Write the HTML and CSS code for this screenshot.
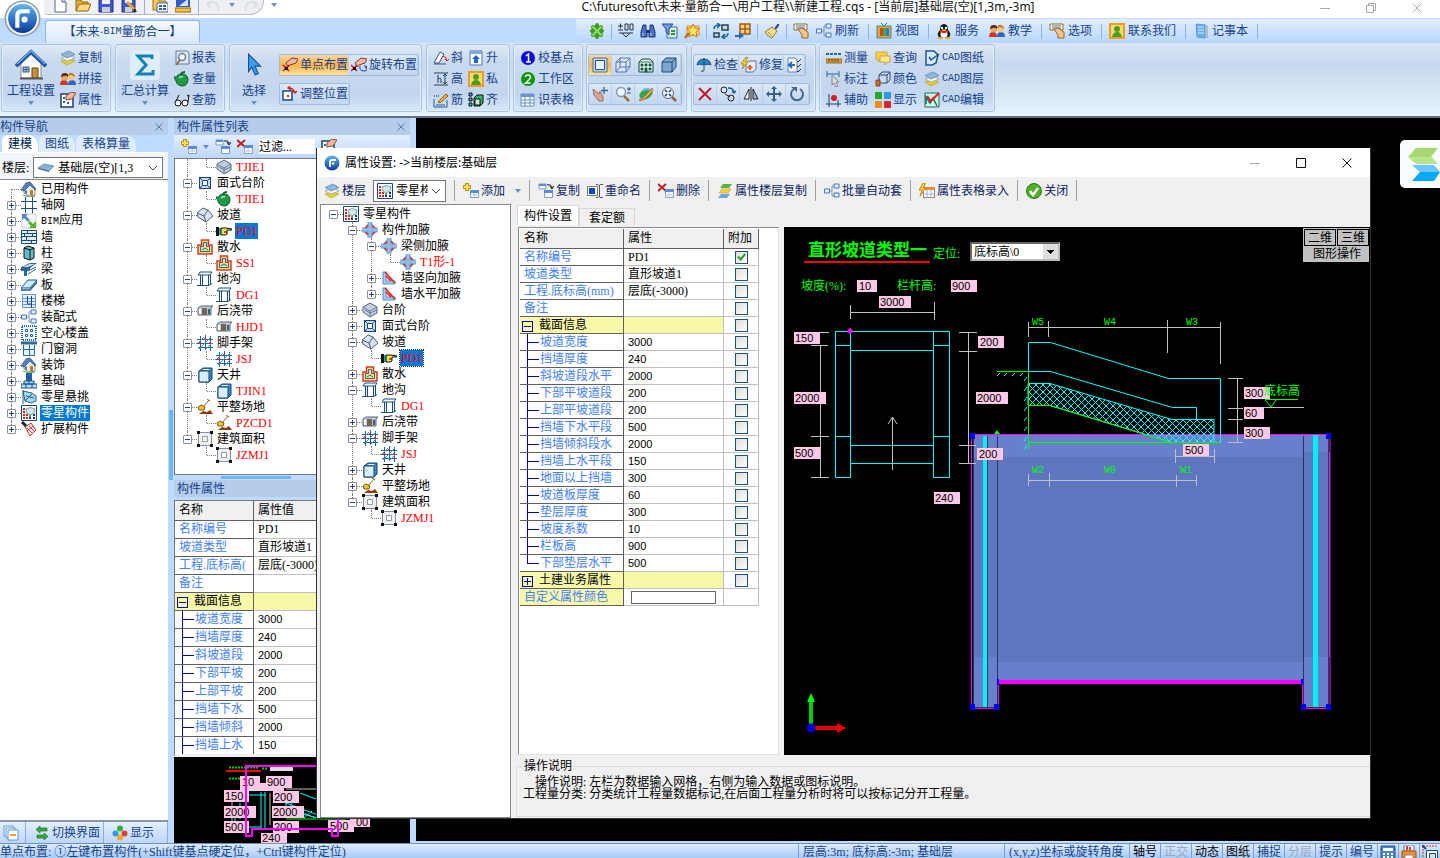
FILE: index.html
```html
<!DOCTYPE html>
<html lang="zh-CN">

<head>
    <meta charset="UTF-8">
    <meta name="viewport" content="width=device-width, initial-scale=1.0">
    <title>未来·BIM量筋合一</title>
    <link rel="stylesheet" href="styles.css">
</head>

<body>
    <!-- icon set -->
    <svg class="defs" width="0" height="0">
        <defs>
            <linearGradient id="gBlue" x1="0" y1="0" x2="0" y2="1"><stop offset="0" stop-color="#5fb4f0"/><stop offset="1" stop-color="#0a3c9c"/></linearGradient>
            <pattern id="hatch" width="7" height="7" patternUnits="userSpaceOnUse"><path d="M0 0L7 7M7 0L0 7" stroke="#0ff" fill="none"/></pattern>
        </defs>
        <symbol id="logo" viewBox="0 0 36 36"><circle cx="18" cy="18" r="17.5" fill="#8d9db3"/><circle cx="18" cy="18" r="16" fill="#f4f7fb"/><circle cx="18" cy="18" r="14" fill="url(#gBlue)"/><path d="M13 27V15q0-4 4-4h8" fill="none" stroke="#fff" stroke-width="4"/><circle cx="20" cy="19" r="3" fill="#fff"/></symbol>
        <symbol id="dlglogo" viewBox="0 0 16 16"><circle cx="8" cy="8" r="7.500" fill="url(#gBlue)"/><path d="M6 12V7q0-2 2-2h4" fill="none" stroke="#fff" stroke-width="1.800"/><circle cx="9" cy="8.500" r="1.300" fill="#fff"/></symbol>
        <symbol id="new" viewBox="0 0 16 16"><path d="M3 1h7l4 4v10H3z" fill="#fff" stroke="#5a6b88"/><path d="M10 1v4h4" fill="#cfd8e8" stroke="#5a6b88"/></symbol>
        <symbol id="open" viewBox="0 0 16 16"><path d="M1 14V3h5l1 2h6v3" fill="#e8b33c" stroke="#8a6414"/><path d="M1 14l3-7h12l-3 7z" fill="#ffd97a" stroke="#8a6414"/></symbol>
        <symbol id="save" viewBox="0 0 16 16"><path d="M1 1h14v14H1z" fill="#4456c8" stroke="#20307c"/><path d="M4 1h8v6H4z" fill="#eef"/><path d="M4 10h8v5H4z" fill="#c9cfe0"/></symbol>
        <symbol id="saveas" viewBox="0 0 16 16"><path d="M1 1h13v14H1z" fill="#4456c8" stroke="#20307c"/><path d="M4 1h7v5H4z" fill="#eef"/><path d="M4 10h7v5H4z" fill="#c9cfe0"/><path d="M6 5l8 8" stroke="#e9a720" stroke-width="3"/><path d="M13 12l2 3" stroke="#222" stroke-width="2"/></symbol>
        <symbol id="folderbe" viewBox="0 0 16 16"><path d="M1 13V2h5l1 2h7v9z" fill="#ffc94d" stroke="#96700f"/><path d="M5 6h11v9H5z" fill="#fff" stroke="#3669ad"/><path d="M7 9h3M7 12h3M11 9h3M11 12h3" stroke="#2b5db0" stroke-width="2"/></symbol>
        <symbol id="setsq" viewBox="0 0 16 16"><path d="M1 1h14v9H1z" fill="#335cc0"/><path d="M4 9l9-7v7z" fill="#cfe2ff"/><path d="M0 11h16v4H0z" fill="#ffc531" stroke="#8a6110"/></symbol>
        <symbol id="undo" viewBox="0 0 16 16"><path d="M4 4l-3 4 4 3M2 8c5-6 12-2 10 6" fill="none" stroke="#dcdfe4" stroke-width="2"/></symbol>
        <symbol id="clover" viewBox="0 0 16 16"><path d="M4 4l8 8M12 4l-8 8M8 2v12M3 8h10" stroke="#3f9a2a" stroke-width="4" stroke-linecap="round"/><path d="M4 4l8 8M12 4l-8 8" stroke="#8fdc62" stroke-width="2" stroke-linecap="round"/></symbol>
        <symbol id="elev" viewBox="0 0 16 16"><path d="M0 3h5M2.500.5v5M0 7h5M7 1h3v6H7zM12 1h3v6h-3zM1 10h14M4 10l4 4 4-4" fill="none" stroke="#26303c"/></symbol>
        <symbol id="binoc" viewBox="0 0 16 16"><path d="M3 2h3v4l1 2v6H1V9zM10 2h3l2 7v5H9V8l1-2z" fill="#4a6fc0" stroke="#1c3677"/><path d="M6 7h4v3H6z" fill="#1c3677"/><path d="M3 10v3M11 10v3" stroke="#bcd3ff"/></symbol>
        <symbol id="filter" viewBox="0 0 16 16"><path d="M5 4h10v11H5z" fill="#dff3d8" stroke="#3668b0"/><path d="M0 1h11L7 6v6L4 9V6z" fill="#6f9ade" stroke="#25498c"/><path d="M9 8h4M9 11h4" stroke="#2b9c35" stroke-width="2"/></symbol>
        <symbol id="star" viewBox="0 0 16 16"><path d="M3 3h12v9H3z" fill="#ffd88a" stroke="#d08a2a"/><path d="M9 1l2 4 4 .5-3 3.500 1 5-4-2.500L5 14l1-5-3-3.500L7 5z" fill="#ffe65c" stroke="#d07c10"/><path d="M1 15l4-5" stroke="#c46d12" stroke-width="2.500"/></symbol>
        <symbol id="swap" viewBox="0 0 16 16"><path d="M1 10h5v4H1zM9 2h6v5H9z" fill="#cfe2c4" stroke="#26405f" stroke-width="1.500"/><path d="M1 6q0-4 5-4M4 0l3 2-3 3M15 10q0 4-5 4M12 11l-3 3 3 2" fill="none" stroke="#17639e" stroke-width="1.500"/></symbol>
        <symbol id="grid4" viewBox="0 0 16 16"><path d="M5 1h10v10H5z" fill="#ffd37e" stroke="#a35b12" stroke-width="1.500"/><path d="M10 1v10M5 6h10" stroke="#a35b12" stroke-width="1.500"/><path d="M0 12h4v-3l5 4-5 3v-2H0z" fill="#2d66c8"/></symbol>
        <symbol id="brush" viewBox="0 0 16 16"><path d="M11 5l3-4 1 1-3 4z" fill="#335ea8" stroke="#1f3f7a"/><path d="M8 4l5 4-5 7q-4-1-7-6z" fill="#f1dd8c" stroke="#997b2c"/><path d="M4 9l4 4" stroke="#b08c2d"/></symbol>
        <symbol id="handsheet" viewBox="0 0 16 16"><path d="M1 1h13v6H1z" fill="#fff8da" stroke="#8a6d2e"/><path d="M3 3h9M3 5h9" stroke="#5676b5"/><path d="M5 6l4 6v3h6v-6L9 5z" fill="#f3c785" stroke="#98642a"/></symbol>
        <symbol id="tree" viewBox="0 0 16 16"><path d="M5 8h3M8 3v10M8 3h2M8 13h2" fill="none" stroke="#8794ab"/><path d="M.5 6h5v4h-5zM10 1h5v4h-5zM10 10h5v4h-5z" fill="#eaf3ff" stroke="#3f72cc"/></symbol>
        <symbol id="tv" viewBox="0 0 16 16"><path d="M5 0l3 3 3-3" fill="none" stroke="#1787a8"/><path d="M1 3h14v12H1z" fill="#e2a632" stroke="#3d8aa0"/><path d="M4 5h3v8H4z" fill="#e63c2a"/><path d="M7 5h3v8H7z" fill="#3fae38"/><path d="M10 5h3v8h-3z" fill="#2f78d6"/></symbol>
        <symbol id="qq" viewBox="0 0 16 16"><path d="M3 14Q0 11 4 7q0-6 4-6t4 6q4 4 1 7z" fill="#15171c"/><ellipse cx="8" cy="11" rx="3.500" ry="4" fill="#fff"/><path d="M4 8q4 2 8 0" stroke="#e32118" stroke-width="2" fill="none"/><path d="M6 4v2M10 4v2" stroke="#fff" stroke-width="2"/><path d="M6 7h4" stroke="#f5a915" stroke-width="1.500"/><path d="M2 15h5M9 15h5" stroke="#f5a915" stroke-width="2"/></symbol>
        <symbol id="people" viewBox="0 0 16 16"><path d="M0 14q0-5 4-5t4 5z" fill="#c93a22"/><path d="M8 14q0-5 4-5t4 5z" fill="#2f62c4"/><circle cx="4.500" cy="6" r="3.500" fill="#e9a866"/><path d="M1 6q0-4 4-4t3 4q-2-2-4-1z" fill="#503017"/><circle cx="11.500" cy="6" r="3.500" fill="#f6c88d"/><path d="M8 5q1-4 4-3t3 4q-3-2-4-2z" fill="#c27a16"/></symbol>
        <symbol id="contact" viewBox="0 0 16 16"><path d="M0 0h16v16H0z" fill="#f09a28"/><path d="M2 2h12v12H2z" fill="#f7dd6c"/><circle cx="8" cy="6" r="3" fill="#4c9c22"/><path d="M3 14q1-5 5-5t5 5z" fill="#4c9c22"/></symbol>
        <symbol id="note" viewBox="0 0 16 16"><path d="M3 1l9 1v13l-8-1z" fill="#6fb1ea" stroke="#4d8cc8" stroke-width=".8"/><path d="M5 4h6M5 7h6M5 10h6" stroke="#cfe7ff"/><path d="M12 2l2 1v12" fill="none" stroke="#999"/></symbol>
        <symbol id="bighouse" viewBox="0 0 32 32"><path d="M6 14L16 4l10 10v15H6z" fill="#fbfbf6" stroke="#8f8f86"/><path d="M1 17L16 3l15 14" fill="none" stroke="#1d569f" stroke-width="4"/><path d="M2 15L16 2l14 13" fill="none" stroke="#6fa8e6" stroke-width="1.500"/><path d="M17 19h6v10h-6z" fill="#c8923d" stroke="#6a4310"/><path d="M8 18h6v5H8zM11 18v5M8 20.500h6" fill="#b9cfe8" stroke="#35557f"/><path d="M5 29.500h23" stroke="#555" stroke-width="2"/></symbol>
        <symbol id="house" viewBox="0 0 16 16"><path d="M3 8l6-6 5 6v6l-6 1-5-3z" fill="#f2efe2" stroke="#8d8d8d"/><path d="M0 9l5-7 4-1 6 7-1 1-5-5-6 6z" fill="#4f82bd" stroke="#2b5590" stroke-width=".8"/><path d="M9 9h3v5H9z" fill="#b97b2b"/><path d="M4 9l2 1v3l-2-1z" fill="#3b75b5"/><path d="M2 14l6 2 6-1" stroke="#5fa33c" fill="none"/></symbol>
        <symbol id="layers" viewBox="0 0 16 16"><path d="M1 11l8-3 6 3-8 4z" fill="#e6cd30" stroke="#bba826" stroke-width=".8"/><path d="M1 8l8-3 6 3-8 3z" fill="#f3f6fa" stroke="#93a5bd" stroke-width=".8"/><path d="M1 4.500L9 1l6 3.500L7 8z" fill="#8fb6dc" stroke="#5f86b1" stroke-width=".8"/></symbol>
        <symbol id="form" viewBox="0 0 16 16"><path d="M1 2h12v13H1z" fill="#fff" stroke="#1c3f6d" stroke-width="1.500"/><path d="M3 5h2v2H3zM3 9h2v2H3zM7 10h2v2H7z" fill="#1b63b0"/><path d="M6 8V4l5-4 5 1-4 6z" fill="#f2b7a0" stroke="#9b452f"/></symbol>
        <symbol id="sigma" viewBox="0 0 32 32"><rect x="1" y="1" width="30" height="30" rx="4" fill="#dfecfa"/><path d="M23 10V7H9l8 9-8 9h15v-4" fill="none" stroke="#0e84b8" stroke-width="3"/></symbol>
        <symbol id="report" viewBox="0 0 16 16"><path d="M2 1h11l2 2v11H2z" fill="#dfe9f6" stroke="#5e7ba6"/><circle cx="8" cy="7" r="3.500" fill="#f5faff" stroke="#6c7f99" stroke-width="1.500"/><path d="M6 10l-4 5" stroke="#9a6a35" stroke-width="2"/></symbol>
        <symbol id="pot" viewBox="0 0 16 16"><path d="M3 6q0-3 5-3t6 5q0 6-5 7-6 0-7-5L0 6z" fill="#1d9a48" stroke="#0c5a26"/><path d="M7 3q1-2 4-2" stroke="#0c5a26" stroke-width="2" fill="none"/><path d="M5 7q2-2 4-1" stroke="#a9f0bd" stroke-width="1.500" fill="none"/></symbol>
        <symbol id="glasses" viewBox="0 0 16 16"><circle cx="4" cy="11" r="3" fill="#fff" stroke="#111"/><circle cx="11" cy="11" r="3" fill="#fff" stroke="#111"/><path d="M2 9l3-6M14 10l1-7-2 1M7 11h1" stroke="#111" fill="none"/></symbol>
        <symbol id="cursor" viewBox="0 0 16 22"><path d="M3 1l11 11H9l3 7-3 1-3-7-3 4z" fill="#3d9bea" stroke="#124f94"/></symbol>
        <symbol id="pick" viewBox="0 0 16 16"><path d="M4 6l6-5 6 1-2 4-6 2-2 2z" fill="#f3b8a2" stroke="#7d3b33"/><path d="M1 8l6 6M7 8l-6 6" stroke="#d11" stroke-width="1.500"/><path d="M3 10h3v3H3z" fill="#111"/></symbol>
        <symbol id="pickrot" viewBox="0 0 16 16"><path d="M4 6l6-5 6 1-2 4-6 2-2 2z" fill="#f3b8a2" stroke="#7d3b33"/><path d="M0 8l6 6M6 8l-6 6" stroke="#d11" stroke-width="1.500"/><path d="M2 10h3v3H2z" fill="#111"/><path d="M9 9q-1 5 4 5t2-5M13 9h2v3" fill="none" stroke="#1e35b8"/></symbol>
        <symbol id="adjust" viewBox="0 0 16 16"><path d="M1 5h9v9H1z" fill="#fff" stroke="#174a80" stroke-width="1.500"/><path d="M5 9h2v2H5z" fill="#d22"/><path d="M6 2q5-1 7 5M8 0L6 2l3 2M11 5l2 2 2-2" fill="none" stroke="#e01212" stroke-width="1.300"/></symbol>
        <symbol id="slope" viewBox="0 0 16 16"><path d="M1 13L7 2l4 2-5 9z" fill="#fff" stroke="#2d558f"/><path d="M1 14h12" stroke="#2d558f"/><path d="M10 6q4 1 4 5M12 9l2 2 2-2" fill="none" stroke="#d22"/></symbol>
        <symbol id="uparr" viewBox="0 0 16 16"><path d="M2 1h12v14H2z" fill="#fff" stroke="#4b77b8"/><path d="M2 1h12v3H2z" fill="#7da7e0"/><path d="M8 5l4 4h-2v4H6V9H4z" fill="#1f66c9"/></symbol>
        <symbol id="height" viewBox="0 0 16 16"><path d="M1 2h14M1 14h14M12 3v10M10 5l2-2 2 2M10 11l2 2 2-2M5 4v8M5 8q3-2 3 1v3" fill="none" stroke="#24405f"/></symbol>
        <symbol id="rebar" viewBox="0 0 16 16"><path d="M1 7v8h13V8M3 13h9" fill="none" stroke="#225e9a"/><path d="M5 10l8-8 2 2-8 7z" fill="#f6b545" stroke="#8a5514"/><path d="M1 4h5" stroke="#222" stroke-dasharray="1 1"/></symbol>
        <symbol id="align" viewBox="0 0 16 16"><path d="M1 1h3v3H1zM1 6h3v3H1zM1 11h3v3H1z" fill="#39b7e0" stroke="#111"/><path d="M6 6l3-3h6v8l-3 3H6z" fill="#36b06a" stroke="#111"/><path d="M7 7h5v6H7z" fill="#cfe9d9" stroke="#111"/></symbol>
        <symbol id="n1" viewBox="0 0 16 16"><circle cx="8" cy="8" r="7" fill="#0b0be0"/><path d="M6 6l2.500-2v8M6 12h5" stroke="#fff" stroke-width="1.500" fill="none"/></symbol>
        <symbol id="n2" viewBox="0 0 16 16"><circle cx="8" cy="8" r="7" fill="#08960c"/><path d="M5.500 6q0-2 2.500-2t2.500 2-5 6h5" stroke="#fff" stroke-width="1.500" fill="none"/></symbol>
        <symbol id="table" viewBox="0 0 16 16"><path d="M1 2h13v12H1z" fill="#fff" stroke="#6a8fc6"/><path d="M1 2h13v3H1z" fill="#6a96d8"/><path d="M1 8h13M1 11h13M5 2v12M10 2v12" stroke="#6a8fc6"/></symbol>
        <symbol id="vrect" viewBox="0 0 16 16"><path d="M1 1h14v14H1z" fill="#c5d6ea" stroke="#4a6e9c"/><path d="M3.500 3.500h9v9h-9z" fill="#e2f4fc" stroke="#2b4f80"/></symbol>
        <symbol id="vcube" viewBox="0 0 16 16"><path d="M1 5l4-4h10v9l-4 5H1zM1 5h10v10M11 5l4-4M5 1v9h10M5 10l-4 5" fill="#e5effc" fill-opacity=".6" stroke="#5377ad"/></symbol>
        <symbol id="vbuild" viewBox="0 0 16 16"><path d="M1 5l3-3h8l3 3v10H1z" fill="#dcece4" stroke="#0d4a3b"/><path d="M1 5h14M3 7h2v2H3zM7 7h2v2H7zM11 7h2v2h-2zM3 11h2v2H3zM11 11h2v2h-2zM7 11h2v4H7z" fill="#0d6a4b" stroke="#0d4a3b" stroke-width=".7"/></symbol>
        <symbol id="vsolid" viewBox="0 0 16 16"><path d="M1 5l4-4h10v9l-4 5H1z" fill="#7ea6d2" stroke="#23466f"/><path d="M1 5h10v10M11 5l4-4" fill="none" stroke="#23466f"/></symbol>
        <symbol id="pan" viewBox="0 0 16 16"><path d="M1 3l6 5 1-3 3 6v4H7L2 9z" fill="#dba494" stroke="#a06a5d"/><path d="M12 1v7M9 4.500h7" stroke="#3b6697" stroke-width="1.300"/></symbol>
        <symbol id="zoom" viewBox="0 0 16 16"><circle cx="6" cy="6" r="4.500" fill="#eaf6ff" stroke="#8a99aa" stroke-width="1.500"/><path d="M9 10l5 5" stroke="#a36a2d" stroke-width="2.500"/><path d="M12 3h4M14 1v4M12 7h4" stroke="#24507f"/></symbol>
        <symbol id="orbit" viewBox="0 0 16 16"><ellipse cx="8" cy="8" rx="7" ry="5" fill="#2fa94a" transform="rotate(-30 8 8)"/><path d="M1 14q4-1 13-12l1 2Q9 13 2 15z" fill="#e9b53c" stroke="#c0453a" stroke-width=".7"/><path d="M5 4q4-2 7 0" stroke="#6fb7ee" stroke-width="2" fill="none"/></symbol>
        <symbol id="zoomall" viewBox="0 0 16 16"><circle cx="7" cy="7" r="5.500" fill="#e8f3ff" stroke="#667"/><path d="M4 4l2 2M8 8l2 2M10 4L8 6M6 8l-2 2" stroke="#173b77" stroke-width="1.500"/><path d="M11 11l4 4" stroke="#a3562d" stroke-width="2.500"/></symbol>
        <symbol id="umbrella" viewBox="0 0 16 16"><path d="M1 8q1-6 7-6t7 6l-3-1-2 1-2-1-2 1-2-1z" fill="#2587cf" stroke="#11558e"/><path d="M8 1v12q0 2-3 1" fill="none" stroke="#444"/></symbol>
        <symbol id="repair" viewBox="0 0 16 16"><path d="M5 6l3-2h7v8l-3 3H5z" fill="#e8eef5" stroke="#5b6f8c"/><path d="M9 8v5M6.500 10.500h5" stroke="#f25b1f" stroke-width="2"/><path d="M5 0L0 7h3l-2 5 6-7H4l3-5z" fill="#ffd42f" stroke="#a57b0d" stroke-width=".8"/></symbol>
        <symbol id="checklist" viewBox="0 0 16 16"><path d="M2 1h7l2 2v12H2z" fill="#fff" stroke="#6582a8"/><path d="M9 8H4M6 5L3 8l3 3" fill="none" stroke="#266bc4" stroke-width="2"/><path d="M11 4l1 1 3-3M11 9l1 1 3-3M11 14l1 1 3-3" fill="none" stroke="#333"/></symbol>
        <symbol id="xred" viewBox="0 0 16 16"><path d="M2 2l12 12M14 2L2 14" stroke="#c8152b" stroke-width="2"/></symbol>
        <symbol id="copyo" viewBox="0 0 16 16"><circle cx="4" cy="4" r="3" fill="none" stroke="#222"/><circle cx="11" cy="12" r="3" fill="none" stroke="#222"/><path d="M5 8l5 3" stroke="#222"/><path d="M8 2q6 0 6 5M12 5l2 2 2-2" fill="none" stroke="#1d5fa8" stroke-width="1.500"/></symbol>
        <symbol id="mirror" viewBox="0 0 16 16"><path d="M6 3v10H1z" fill="#fff" stroke="#222"/><path d="M10 3v10h5z" fill="#9db8d8" stroke="#222"/><path d="M8 1v14" stroke="#222"/></symbol>
        <symbol id="move" viewBox="0 0 16 16"><path d="M8 2v12M2 8h12" stroke="#35618f" stroke-width="2"/><path d="M8 0l3 3H5zM8 16l3-3H5zM0 8l3-3v6zM16 8l-3-3v6z" fill="#35618f"/></symbol>
        <symbol id="rotate" viewBox="0 0 16 16"><path d="M5 3a6 6 0 1 0 6 0" fill="none" stroke="#41668f" stroke-width="2"/><path d="M2 1h6v5z" fill="#41668f"/></symbol>
        <symbol id="ruler" viewBox="0 0 16 16"><path d="M0 4h16" stroke="#2369a8" stroke-width="2" stroke-dasharray="3 1"/><path d="M0 9h16v4H0z" fill="#e1a62c" stroke="#86590d" stroke-width=".8"/><path d="M3 9v3M6 9v3M9 9v3M12 9v3" stroke="#5b3a06"/></symbol>
        <symbol id="dimcur" viewBox="0 0 16 16"><path d="M1 0v6M13 0v6M1 3h12" stroke="#2369a8"/><path d="M6 4l7 7h-3l2 4-2 1-2-4-2 2z" fill="#ddd" stroke="#888"/></symbol>
        <symbol id="axisp" viewBox="0 0 16 16"><path d="M3 2v13M0 12h15M12 8v7" stroke="#163f78"/><circle cx="8" cy="6" r="3" fill="#dc1b1b"/></symbol>
        <symbol id="bubble" viewBox="0 0 16 16"><path d="M1 2h11v7H6l-3 3V9H1z" fill="#ffd142" stroke="#c29a2c" stroke-width=".8"/><path d="M5 6h10v6h-3l-2 3v-3H5z" fill="#ffe88b" stroke="#c29a2c" stroke-width=".8"/></symbol>
        <symbol id="paintcube" viewBox="0 0 16 16"><path d="M4 4l3-3h8v8l-3 3H4zM4 4h8v8M12 4l3-3" fill="#c9dbf0" stroke="#264a78"/><path d="M1 9h4v6H1z" fill="#d06b29" stroke="#6f3511" stroke-width=".8"/></symbol>
        <symbol id="four" viewBox="0 0 16 16"><rect x="0" y="0" width="7" height="7" rx="1" fill="#23a829"/><rect x="9" y="0" width="7" height="7" rx="1" fill="#2a9be6"/><rect x="0" y="9" width="7" height="7" rx="1" fill="#f08a1d"/><rect x="9" y="9" width="7" height="7" rx="1" fill="#e02323"/></symbol>
        <symbol id="cadpaper" viewBox="0 0 16 16"><path d="M2 1h8l4 4-2 8-4 2H2z" fill="#d8eafd" stroke="#1f5596" stroke-width="1.500"/><path d="M5 7l2 3 8-6" stroke="#1f5596" stroke-width="1.500" fill="none"/></symbol>
        <symbol id="cadedit" viewBox="0 0 16 16"><path d="M1 1h14v14H1z" fill="#d5f0e4" stroke="#0d7261"/><path d="M2 12V5l4 6 3-5 4 8" stroke="#0d7261" stroke-width="1.500" fill="none"/><path d="M3 4l4 5 8-8" stroke="#e01c1c" stroke-width="2" fill="none"/></symbol>
        <!-- component icons -->
        <symbol id="slab3d" viewBox="0 0 16 16"><path d="M0 8l6-4 10 2-5 5z" fill="#88b3d9" stroke="#55799e" stroke-width=".7"/><path d="M0 8l11 3v1L0 9z" fill="#42678f"/></symbol>
        <symbol id="axis" viewBox="0 0 16 16"><path d="M4.500 0v16M11.500 0v16M0 4.500h16M0 11.500h16" stroke="#1a5384"/></symbol>
        <symbol id="bim" viewBox="0 0 16 16"><path d="M1 1h14v14H1z" fill="#f3f7fb" stroke="#c6d5e6"/><path d="M1 1h6L5 3l4 4-2 2-4-4-2 2z" fill="#5c86bd"/><path d="M15 15H8l2-2-3-3 2-2 3 3 3-3z" fill="#55b41d"/></symbol>
        <symbol id="wall" viewBox="0 0 16 16"><path d="M.5 1.500h15v13H.5z" fill="#e3f0fa" stroke="#17497c"/><path d="M0 4.500h16M0 7.500h16M0 11.500h16M6.500 1v3M11.500 4v4M5.500 8v3M10.500 12v3M3.500 5v3" stroke="#17497c"/></symbol>
        <symbol id="column" viewBox="0 0 16 16"><path d="M3 3l4-2 6 2v10l-4 2-6-2z" fill="#65bccd" stroke="#111"/><path d="M3 3l6 2 4-2M9 5v10" fill="none" stroke="#111"/></symbol>
        <symbol id="beam" viewBox="0 0 16 16"><path d="M0 6l9-4h7l-7 5v2l-3 1v5H3v-5H0z" fill="#2c6699"/><path d="M1 6l8-3h5L7 6z" fill="#cfe4f5"/><path d="M7 10l8-4M7 13l8-5" stroke="#2c6699"/></symbol>
        <symbol id="plate" viewBox="0 0 16 16"><path d="M0 11l7-8h9l-7 8z" fill="#cfe9fb" stroke="#1a5c92"/><path d="M0 11v2h9l7-8V3" fill="none" stroke="#1a5c92" stroke-width="1.500"/></symbol>
        <symbol id="stair" viewBox="0 0 16 16"><path d="M1.500 1.500h13v13h-13z" fill="#e6f1ff" stroke="#6193e8"/><path d="M1 5.500h14M1 8.500h14M1 11.500h14" stroke="#6193e8"/><path d="M6.500 3v8h4V3M10.500 7v8" fill="none" stroke="#1f3fb5"/></symbol>
        <symbol id="hollow" viewBox="0 0 16 16"><path d="M1 1h14v14H1z" fill="#e9f4ff" stroke="#2c649c" stroke-width="2" stroke-dasharray="1 1"/><path d="M4.500 4.500h2v2h-2zM9.500 4.500h2v2h-2zM4.500 9.500h2v2h-2zM9.500 9.500h2v2h-2z" fill="#fff" stroke="#2c649c"/></symbol>
        <symbol id="window" viewBox="0 0 16 16"><path d="M0 2h16" stroke="#2a6a9b" stroke-width="3"/><path d="M2.500 4v10.500h11V4M8.500 4v11M2 8.500h12" fill="#e4f6fc" stroke="#2a6a9b"/></symbol>
        <symbol id="found" viewBox="0 0 16 16"><path d="M5 0h6v8H5z" fill="#1b62a8"/><path d="M3 8h10v3H3zM0 11h16v4H0z" fill="#b9dcf5" stroke="#14528d"/><path d="M8 8v3M5 11v4M11 11v4" stroke="#14528d"/></symbol>
        <symbol id="cantil" viewBox="0 0 16 16"><path d="M2 1v14M2 2l9 2 4 3v5l-5 2-6-2z" fill="#a6d6ee" stroke="#1b628f"/><path d="M4 12l7-7M5 7l8 2" stroke="#1b628f"/></symbol>
        <symbol id="misc" viewBox="0 0 16 16"><path d="M.5.5h15v15H.5z" fill="#fff" stroke="#17497c"/><path d="M2 4h2M2 7h2M2 10h2M2 13h2M5 10h2M5 13h2" stroke="#d22" stroke-width="2"/><path d="M8 13h2M12 13h2M12 10h2" stroke="#1b2f90" stroke-width="2"/><path d="M5 4q4-3 9 0l-1 4-4 2-3-2z" fill="#d5e9ed" stroke="#7fa0aa"/><path d="M8 11h2" stroke="#1a8f2a" stroke-width="1.500"/></symbol>
        <symbol id="extend" viewBox="0 0 16 16"><path d="M4 6l6-4 5 7-6 6z" fill="#f7e6e6" stroke="#b33838"/><path d="M6 7l5 5M8 5l5 5M6 10l6-5" stroke="#d43b3b"/><path d="M1 1l4 4" stroke="#222" stroke-width="3"/></symbol>
        <symbol id="steps" viewBox="0 0 16 16"><path d="M1 5l7-4 7 4v6l-7 4-7-5z" fill="#c2cde0" stroke="#56647e"/><path d="M2 6l6 3 7-4M3 8l5 3 7-3M8 15V9" fill="none" stroke="#6c7b97"/></symbol>
        <symbol id="facestep" viewBox="0 0 16 16"><path d="M2.500 2.500h11v11h-11z" fill="#c7dcf3" stroke="#18457b"/><path d="M5.500 5.500h5v5h-5zM2 2l3 3M14 2l-3 3M2 14l3-3M14 14l-3-3" fill="#fff" stroke="#18457b"/></symbol>
        <symbol id="ramp" viewBox="0 0 16 16"><path d="M0 6l6-5 5 2 5 6-7 6-8-5z" fill="#dbe4f4" stroke="#4c5b7d"/><path d="M0 6l7 3 4-6M7 9l2 6" fill="none" stroke="#4c5b7d"/></symbol>
        <symbol id="hand" viewBox="0 0 16 16"><path d="M0 4h3v9H0z" fill="#111"/><path d="M3 5h2v7H3z" fill="#10b4c0"/><path d="M5 5h5l6 1v1h-5v4l-2 1H5z" fill="#ffe14a" stroke="#111"/><path d="M8 9h3" stroke="#111"/></symbol>
        <symbol id="apron" viewBox="0 0 16 16"><path d="M4.500 1h7v5h3.500v9H1V6h3.500z" fill="#f7e27a" stroke="#cf3b31" stroke-width="1.500"/><path d="M6.500 3.500h3v4h3v5h-9v-5h3z" fill="#f7e27a" stroke="#2f62a5"/><path d="M5 11l3-2 3 2" fill="none" stroke="#2f62a5"/></symbol>
        <symbol id="trench" viewBox="0 0 16 16"><path d="M1 4l2-3h12l-2 3z" fill="#fff" stroke="#154d86"/><path d="M3.500 4v10M11.500 4v10M5.500 4v10M0 14.500h12l3-2M13.500 4v9" fill="none" stroke="#154d86"/></symbol>
        <symbol id="strip" viewBox="0 0 16 16"><path d="M1 5l3-2h12l-2 2v7H1z" fill="#b8c6d7" stroke="#56677f"/><path d="M5 5h5v7H5z" fill="#7a644f"/><path d="M2 6h2v5H2z" fill="#fff"/><path d="M11 6h2v5h-2z" fill="#3f5c80"/></symbol>
        <symbol id="scaffold" viewBox="0 0 16 16"><path d="M3.500 1v15M8.500 0v15M13.500 1v15M0 4.500h16M0 8.500h16M1 12.500h15" stroke="#1b66a5"/><path d="M2 14L14 2M1 8l6-6M8 15l7-7" stroke="#4f8cc8"/><path d="M3 7v2M8 3v2M12 8h2" stroke="#d22" stroke-width="1.500"/></symbol>
        <symbol id="well" viewBox="0 0 16 16"><path d="M2 4l4-3h9v11l-3 3H2z" fill="#3c87bd" stroke="#0f4475"/><path d="M2 4h10v11H2z" fill="#d9eefb" stroke="#0f4475"/><path d="M5 3l2-1h6l-2 1z" fill="#fff"/></symbol>
        <symbol id="shovel" viewBox="0 0 16 16"><path d="M6 8L12 1M10 0l3 2" stroke="#8a6216"/><path d="M1 8l3-2 4 2-1 3H2z" fill="#f3c332" stroke="#7c5a0d"/><path d="M2 15l4-3 4 1 3-2 3 4z" fill="#8b3d12"/></symbol>
        <symbol id="area" viewBox="0 0 16 16"><path d="M1.500 1.500h13v13h-13z" fill="#eef1f8" stroke="#8a8f9c"/><path d="M5.500 5.500h5v5h-5z" fill="#fff" stroke="#999"/><path d="M0 0h3v3H0zM13 0h3v3h-3zM0 13h3v3H0zM13 13h3v3h-3z" fill="#111"/></symbol>
        <symbol id="haunch" viewBox="0 0 16 16"><path d="M8 0l8 8-8 8-8-8z" fill="#e32b1e"/><path d="M8 3l5 5-5 5-5-5z" fill="#fff"/><path d="M6 0h4v16H6zM0 6h16v4H0z" fill="#8fbbe8"/><path d="M6 0v6H0M10 0v6h6M6 16v-6H0M10 16v-6h6" fill="none" stroke="#5a8fc4" stroke-width=".7"/></symbol>
        <symbol id="whaunch" viewBox="0 0 16 16"><path d="M2 2h3v9h9v3H2z" fill="#a9c9ec" stroke="#5f8fc9"/><path d="M4 2l10 11M5 6l5 5" stroke="#d9231c" stroke-width="1.500"/></symbol>
        <symbol id="add" viewBox="0 0 16 16"><path d="M4 0v8M0 4h8" stroke="#b8951f" stroke-width="4"/><path d="M4 1v6M1 4h6" stroke="#ffe14d" stroke-width="2"/><path d="M7.500 7.500h8v7h-8z" fill="#fff" stroke="#7f9ac5"/><path d="M7 7h9v3H7z" fill="#5c8bd6"/><path d="M7 12h9M11 10v5" stroke="#b5c6e0"/></symbol>
        <symbol id="copy" viewBox="0 0 16 16"><path d="M1 1h7v5H1z" fill="#fff" stroke="#7f9ac5"/><path d="M1 1h7v2H1z" fill="#5c8bd6"/><path d="M6.500 7.500h8v7h-8z" fill="#fff" stroke="#7f9ac5"/><path d="M6 7h9v3H6z" fill="#5c8bd6"/><path d="M9 2q5-1 5 3M12 3l2 3 2-3" fill="none" stroke="#111"/></symbol>
        <symbol id="del" viewBox="0 0 16 16"><path d="M0 1l8 7M8 1L0 8" stroke="#c01c1c" stroke-width="2"/><path d="M7.500 6.500h8v8h-8z" fill="#fff" stroke="#7f9ac5"/><path d="M7 6h9v3H7z" fill="#5c8bd6"/><path d="M7 12h9M11 9v6" stroke="#b5c6e0"/></symbol>
        <symbol id="rename" viewBox="0 0 16 16"><path d="M.5 3.500h10v9H.5z" fill="#fff" stroke="#777"/><path d="M2 5h6v6H2z" fill="#1345c9"/><path d="M9 1.500h2l1 1 1-1h3M12.500 2v12M9 14.500h2l1-1 1 1h3" fill="none" stroke="#555"/></symbol>
        <symbol id="stack" viewBox="0 0 16 16"><path d="M3 5l3-4h9l-3 4z" fill="#57b53c"/><path d="M2 10l3-4h9l-3 4z" fill="#f6d13c" stroke="#c79a20" stroke-width=".6"/><path d="M1 15l3-4h9l-3 4z" fill="#64a7ea"/></symbol>
        <symbol id="entry" viewBox="0 0 16 16"><path d="M4.500 4.500h11v10h-11z" fill="#fff" stroke="#a07a60"/><path d="M4 4h12v3H4z" fill="#f08a3c"/><path d="M4 11h12M8 7v8M12 7v8" stroke="#9db4d8"/><path d="M4 0L0 7h3l-2 6 6-8H4l3-5z" fill="#ffd42f" stroke="#a57b0d" stroke-width=".8"/></symbol>
        <symbol id="ok" viewBox="0 0 16 16"><circle cx="8" cy="8" r="7.500" fill="#4caf24" stroke="#2d7412"/><path d="M4 8l3 4 5-7" fill="none" stroke="#fff" stroke-width="2.500"/></symbol>
        <symbol id="pages" viewBox="0 0 16 16"><path d="M1 1h9v10H1z" fill="#fff" stroke="#5a9ad8"/><path d="M3 3h9v10H3z" fill="#fff" stroke="#5a9ad8"/><path d="M5 5h10v10H5z" fill="#fff" stroke="#5a9ad8"/><path d="M7 10h6" stroke="#f2a019" stroke-width="2"/></symbol>
        <symbol id="switch" viewBox="0 0 16 16"><path d="M6 1v2h7v3H6v2L2 4.500zM10 8v2H3v3h7v2l4-3.500z" fill="#35a83a" stroke="#1b7a22" stroke-width=".7"/></symbol>
        <symbol id="balls" viewBox="0 0 16 16"><circle cx="8" cy="3.500" r="3" fill="#33b13a"/><circle cx="3.500" cy="8.500" r="3" fill="#2b9ae0"/><circle cx="12.500" cy="8.500" r="3" fill="#e2402b"/><circle cx="8" cy="12.500" r="3" fill="#f4a921"/></symbol>
        <symbol id="calc" viewBox="0 0 16 16"><path d="M1 1h14v14H1z" fill="#4d86c8" stroke="#23508c"/><path d="M3 3h10v3H3z" fill="#fff"/><path d="M3 9h10M3 12h10" stroke="#fff" stroke-width="2" stroke-dasharray="2 2"/></symbol>
        <symbol id="print" viewBox="0 0 16 16"><path d="M3 0h10v6H3z" fill="#fff" stroke="#3c7cc0"/><path d="M6 1v4M9 2v3" stroke="#e33" stroke-width="2"/><path d="M1 6h14v7H1z" fill="#f0912b" stroke="#9b550f"/><path d="M4 10h8v5H4z" fill="#fff" stroke="#888"/></symbol>
        <symbol id="frame" viewBox="0 0 16 16"><path d="M1 1h15M1 1v15" stroke="#d22" stroke-dasharray="2 1"/><path d="M4.500 5.500h11v11h-11z" fill="#fff" stroke="#174a80"/><path d="M7.500 8.500h6v8h-6z" fill="#cfe2f7" stroke="#174a80"/><path d="M0 0l4 4" stroke="#174a80" stroke-width="2"/></symbol>
        <symbol id="down" viewBox="0 0 6 4"><path d="M0 0h6L3 4z" fill="#6d8fbf"/></symbol>
        <symbol id="chev" viewBox="0 0 10 6"><path d="M1 1l4 4 4-4" fill="none" stroke="#444"/></symbol>
        <symbol id="x" viewBox="0 0 10 10"><path d="M.5.5l9 9M9.500.5l-9 9" stroke="currentColor" fill="none"/></symbol>
        <symbol id="min" viewBox="0 0 10 10"><path d="M0 5.500h10" stroke="currentColor"/></symbol>
        <symbol id="max" viewBox="0 0 10 10"><path d="M.5.5h9v9h-9z" stroke="currentColor" fill="none"/></symbol>
        <symbol id="restore" viewBox="0 0 10 10"><path d="M.5 2.500h7v7h-7zM2.500 2.500v-2h7v7h-2" stroke="currentColor" fill="none"/></symbol>
    </svg>

    <header class="app-header">
        <div class="titlebar">
            <div class="quick">
                <button><svg class="ic"><use href="#new"/></svg></button>
                <button><svg class="ic"><use href="#open"/></svg></button>
                <button><svg class="ic"><use href="#save"/></svg></button>
                <button><svg class="ic"><use href="#saveas"/></svg></button>
                <i class="sep"></i>
                <button><svg class="ic"><use href="#folderbe"/></svg></button>
                <button><svg class="ic"><use href="#setsq"/></svg></button>
                <i class="sep"></i>
                <button><svg class="ic"><use href="#undo"/></svg></button>
                <svg class="down"><use href="#down"/></svg>
                <button><svg class="ic flip"><use href="#undo"/></svg></button>
                <svg class="down"><use href="#down"/></svg>
            </div>
            <button class="quick-more"><svg class="down"><use href="#down"/></svg></button>
            <h1 class="title">C:\futuresoft\未来·量筋合一\用户工程\\新建工程.cqs - [当前层]基础层(空)[1,3m,-3m]</h1>
            <div class="win-btns muted">
                <button aria-label="最小化"><svg><use href="#min"/></svg></button>
                <button aria-label="还原"><svg><use href="#restore"/></svg></button>
                <button aria-label="退出"><svg><use href="#x"/></svg></button>
            </div>
        </div>
        <button class="app-logo" aria-label="菜单"><svg><use href="#logo"/></svg></button>
        <div class="tabrow">
            <button class="app-tab">【未来·<span class="lat">BIM</span>量筋合一】</button>
            <nav class="topbar">
                <button><svg class="ic"><use href="#clover"/></svg></button>
                <i class="sep"></i>
                <button><svg class="ic"><use href="#elev"/></svg></button>
                <button><svg class="ic"><use href="#binoc"/></svg></button>
                <button><svg class="ic"><use href="#filter"/></svg></button>
                <button><svg class="ic"><use href="#star"/></svg></button>
                <i class="sep"></i>
                <button><svg class="ic"><use href="#swap"/></svg></button>
                <button><svg class="ic"><use href="#grid4"/></svg></button>
                <i class="sep"></i>
                <button><svg class="ic"><use href="#brush"/></svg></button>
                <i class="sep"></i>
                <button><svg class="ic"><use href="#handsheet"/></svg></button>
                <button class="txt"><svg class="ic"><use href="#tree"/></svg>刷新</button>
                <i class="sep"></i>
                <button class="txt"><svg class="ic"><use href="#tv"/></svg>视图</button>
                <i class="sep"></i>
                <button class="txt"><svg class="ic"><use href="#qq"/></svg>服务</button>
                <button class="txt"><svg class="ic"><use href="#people"/></svg>教学</button>
                <i class="sep"></i>
                <button class="txt"><svg class="ic"><use href="#handsheet"/></svg>选项</button>
                <i class="sep"></i>
                <button class="txt"><svg class="ic"><use href="#contact"/></svg>联系我们</button>
                <i class="sep"></i>
                <button class="txt"><svg class="ic"><use href="#note"/></svg>记事本</button>
                <i class="sep"></i>
            </nav>
        </div>
        <div class="ribbon">
            <section class="group g1">
                <button class="big"><svg class="big-ic"><use href="#bighouse"/></svg>工程设置<svg class="down"><use href="#down"/></svg></button>
                <div class="col">
                    <button><svg class="ic"><use href="#layers"/></svg>复制</button>
                    <button><svg class="ic"><use href="#people"/></svg>拼接</button>
                    <button><svg class="ic"><use href="#form"/></svg>属性</button>
                </div>
            </section>
            <section class="group g1">
                <button class="big"><svg class="big-ic"><use href="#sigma"/></svg>汇总计算<svg class="down"><use href="#down"/></svg></button>
                <div class="col">
                    <button><svg class="ic"><use href="#report"/></svg>报表</button>
                    <button><svg class="ic"><use href="#pot"/></svg>查量</button>
                    <button><svg class="ic"><use href="#glasses"/></svg>查筋</button>
                </div>
            </section>
            <section class="group g3">
                <button class="big narrow"><svg class="big-ic"><use href="#cursor"/></svg>选择<svg class="down"><use href="#down"/></svg></button>
                <div class="bars">
                    <div class="bar">
                        <button class="on"><svg class="ic"><use href="#pick"/></svg>单点布置</button>
                        <button><svg class="ic"><use href="#pickrot"/></svg>旋转布置</button>
                    </div>
                    <div class="bar">
                        <button><svg class="ic"><use href="#adjust"/></svg>调整位置</button>
                    </div>
                </div>
            </section>
            <section class="group g4">
                <div class="col">
                    <button><svg class="ic"><use href="#slope"/></svg>斜</button>
                    <button><svg class="ic"><use href="#height"/></svg>高</button>
                    <button><svg class="ic"><use href="#rebar"/></svg>筋</button>
                </div>
                <div class="col">
                    <button><svg class="ic"><use href="#uparr"/></svg>升</button>
                    <button><svg class="ic"><use href="#contact"/></svg>私</button>
                    <button><svg class="ic"><use href="#align"/></svg>齐</button>
                </div>
            </section>
            <section class="group g5">
                <div class="col">
                    <button><svg class="ic"><use href="#n1"/></svg>校基点</button>
                    <button><svg class="ic"><use href="#n2"/></svg>工作区</button>
                    <button><svg class="ic"><use href="#table"/></svg>识表格</button>
                </div>
            </section>
            <section class="group g6">
                <div class="bars">
                    <div class="bar icons">
                        <button class="on"><svg class="ic"><use href="#vrect"/></svg></button>
                        <button><svg class="ic"><use href="#vcube"/></svg></button>
                        <button><svg class="ic"><use href="#vbuild"/></svg></button>
                        <button><svg class="ic"><use href="#vsolid"/></svg></button>
                    </div>
                    <div class="bar icons">
                        <button><svg class="ic"><use href="#pan"/></svg></button>
                        <button><svg class="ic"><use href="#zoom"/></svg></button>
                        <button><svg class="ic"><use href="#orbit"/></svg></button>
                        <button><svg class="ic"><use href="#zoomall"/></svg></button>
                    </div>
                </div>
            </section>
            <section class="group g7">
                <div class="bars">
                    <div class="bar">
                        <button><svg class="ic"><use href="#umbrella"/></svg>检查</button>
                        <button><svg class="ic"><use href="#repair"/></svg>修复</button>
                        <button class="only"><svg class="ic"><use href="#checklist"/></svg></button>
                    </div>
                    <div class="bar icons">
                        <button><svg class="ic"><use href="#xred"/></svg></button>
                        <button><svg class="ic"><use href="#copyo"/></svg></button>
                        <button><svg class="ic"><use href="#mirror"/></svg></button>
                        <button><svg class="ic"><use href="#move"/></svg></button>
                        <button><svg class="ic"><use href="#rotate"/></svg></button>
                    </div>
                </div>
            </section>
            <section class="group g8">
                <div class="col">
                    <button><svg class="ic"><use href="#ruler"/></svg>测量</button>
                    <button><svg class="ic"><use href="#dimcur"/></svg>标注</button>
                    <button><svg class="ic"><use href="#axisp"/></svg>辅助</button>
                </div>
                <div class="col">
                    <button><svg class="ic"><use href="#bubble"/></svg>查询</button>
                    <button><svg class="ic"><use href="#paintcube"/></svg>颜色</button>
                    <button><svg class="ic"><use href="#four"/></svg>显示</button>
                </div>
                <div class="col">
                    <button><svg class="ic"><use href="#cadpaper"/></svg><span class="lat">CAD</span>图纸</button>
                    <button><svg class="ic"><use href="#layers"/></svg><span class="lat">CAD</span>图层</button>
                    <button><svg class="ic"><use href="#cadedit"/></svg><span class="lat">CAD</span>编辑</button>
                </div>
            </section>
        </div>
    </header>

    <main class="workspace">
        <aside class="nav-panel">
            <div class="panel-head"><h2>构件导航</h2><button aria-label="关闭导航"><svg><use href="#x"/></svg></button></div>
            <div class="nav-tabs">
                <button class="active">建模</button>
                <button>图纸</button>
                <button>表格算量</button>
            </div>
            <div class="floor">
                <label for="floor">楼层:</label>
                <div class="combo">
                    <svg class="ic"><use href="#slab3d"/></svg>
                    <select id="floor"><option>基础层(空)[1,3</option></select>
                    <svg class="chev"><use href="#chev"/></svg>
                </div>
            </div>
            <ul class="tree nav-tree">
                <li><div class="row"><svg class="ic"><use href="#house"/></svg><span>已用构件</span></div></li>
                <li><div class="row"><button class="exp plus"></button><svg class="ic"><use href="#axis"/></svg><span>轴网</span></div></li>
                <li><div class="row"><button class="exp plus"></button><svg class="ic"><use href="#bim"/></svg><span><span class="lat">BIM</span>应用</span></div></li>
                <li><div class="row"><button class="exp plus"></button><svg class="ic"><use href="#wall"/></svg><span>墙</span></div></li>
                <li><div class="row"><button class="exp plus"></button><svg class="ic"><use href="#column"/></svg><span>柱</span></div></li>
                <li><div class="row"><button class="exp plus"></button><svg class="ic"><use href="#beam"/></svg><span>梁</span></div></li>
                <li><div class="row"><button class="exp plus"></button><svg class="ic"><use href="#plate"/></svg><span>板</span></div></li>
                <li><div class="row"><button class="exp plus"></button><svg class="ic"><use href="#stair"/></svg><span>楼梯</span></div></li>
                <li><div class="row"><button class="exp plus"></button><svg class="ic"><use href="#tree"/></svg><span>装配式</span></div></li>
                <li><div class="row"><button class="exp plus"></button><svg class="ic"><use href="#hollow"/></svg><span>空心楼盖</span></div></li>
                <li><div class="row"><button class="exp plus"></button><svg class="ic"><use href="#window"/></svg><span>门窗洞</span></div></li>
                <li><div class="row"><button class="exp plus"></button><svg class="ic"><use href="#house"/></svg><span>装饰</span></div></li>
                <li><div class="row"><button class="exp plus"></button><svg class="ic"><use href="#found"/></svg><span>基础</span></div></li>
                <li><div class="row"><button class="exp plus"></button><svg class="ic"><use href="#cantil"/></svg><span>零星悬挑</span></div></li>
                <li><div class="row"><button class="exp plus"></button><svg class="ic"><use href="#misc"/></svg><span class="sel">零星构件</span></div></li>
                <li><div class="row"><button class="exp plus"></button><svg class="ic"><use href="#extend"/></svg><span>扩展构件</span></div></li>
            </ul>
            <div class="nav-foot">
                <button><svg class="ic"><use href="#pages"/></svg></button>
                <button><svg class="ic"><use href="#switch"/></svg>切换界面</button>
                <button><svg class="ic"><use href="#balls"/></svg>显示</button>
            </div>
        </aside>

        <div class="splitter"></div>

        <aside class="list-panel">
            <div class="panel-head"><h2>构件属性列表</h2><button aria-label="关闭列表"><svg><use href="#x"/></svg></button></div>
            <div class="list-tools">
                <button><svg class="ic"><use href="#add"/></svg></button>
                <svg class="down"><use href="#down"/></svg>
                <button><svg class="ic"><use href="#copy"/></svg></button>
                <button><svg class="ic"><use href="#del"/></svg></button>
                <input type="text" value="过滤..." aria-label="过滤">
                <button><svg class="ic"><use href="#form"/></svg></button>
            </div>
            <ul class="tree list-tree">
                <li><ul><li><div class="row red"><svg class="ic"><use href="#steps"/></svg><span>TJIE1</span></div></li></ul></li>
                <li><div class="row"><button class="exp"></button><svg class="ic"><use href="#facestep"/></svg><span>面式台阶</span></div>
                    <ul><li><div class="row red"><svg class="ic"><use href="#pot"/></svg><span>TJIE1</span></div></li></ul></li>
                <li><div class="row"><button class="exp"></button><svg class="ic"><use href="#ramp"/></svg><span>坡道</span></div>
                    <ul><li><div class="row red"><svg class="ic"><use href="#hand"/></svg><span class="sel">PD1</span></div></li></ul></li>
                <li><div class="row"><button class="exp"></button><svg class="ic"><use href="#apron"/></svg><span>散水</span></div>
                    <ul><li><div class="row red"><svg class="ic"><use href="#apron"/></svg><span>SS1</span></div></li></ul></li>
                <li><div class="row"><button class="exp"></button><svg class="ic"><use href="#trench"/></svg><span>地沟</span></div>
                    <ul><li><div class="row red"><svg class="ic"><use href="#trench"/></svg><span>DG1</span></div></li></ul></li>
                <li><div class="row"><button class="exp"></button><svg class="ic"><use href="#strip"/></svg><span>后浇带</span></div>
                    <ul><li><div class="row red"><svg class="ic"><use href="#strip"/></svg><span>HJD1</span></div></li></ul></li>
                <li><div class="row"><button class="exp"></button><svg class="ic"><use href="#scaffold"/></svg><span>脚手架</span></div>
                    <ul><li><div class="row red"><svg class="ic"><use href="#scaffold"/></svg><span>JSJ</span></div></li></ul></li>
                <li><div class="row"><button class="exp"></button><svg class="ic"><use href="#well"/></svg><span>天井</span></div>
                    <ul><li><div class="row red"><svg class="ic"><use href="#well"/></svg><span>TJIN1</span></div></li></ul></li>
                <li><div class="row"><button class="exp"></button><svg class="ic"><use href="#shovel"/></svg><span>平整场地</span></div>
                    <ul><li><div class="row red"><svg class="ic"><use href="#shovel"/></svg><span>PZCD1</span></div></li></ul></li>
                <li><div class="row"><button class="exp"></button><svg class="ic"><use href="#area"/></svg><span>建筑面积</span></div>
                    <ul><li><div class="row red"><svg class="ic"><use href="#area"/></svg><span>JZMJ1</span></div></li></ul></li>
            </ul>
            <div class="hsplit"></div>
            <div class="panel-head"><h2>构件属性</h2></div>
            <div class="prop-box">
                <table class="props small">
                    <colgroup><col class="c-name"><col></colgroup>
                    <thead><tr><th>名称</th><th>属性值</th></tr></thead>
                    <tbody>
                        <tr><th>名称编号</th><td>PD1</td></tr>
                        <tr><th>坡道类型</th><td>直形坡道1</td></tr>
                        <tr><th>工程.底标高(</th><td>层底(-3000)</td></tr>
                        <tr><th>备注</th><td></td></tr>
                        <tr class="sec"><th><button class="fold"></button>截面信息</th><td></td></tr>
                        <tr class="sub"><th>坡道宽度</th><td>3000</td></tr>
                        <tr class="sub"><th>挡墙厚度</th><td>240</td></tr>
                        <tr class="sub"><th>斜坡道段</th><td>2000</td></tr>
                        <tr class="sub"><th>下部平坡</th><td>200</td></tr>
                        <tr class="sub"><th>上部平坡</th><td>200</td></tr>
                        <tr class="sub"><th>挡墙下水</th><td>500</td></tr>
                        <tr class="sub"><th>挡墙倾斜</th><td>2000</td></tr>
                        <tr class="sub"><th>挡墙上水</th><td>150</td></tr>
                    </tbody>
                </table>
            </div>
            <svg class="preview" viewBox="174 757 236 86" preserveAspectRatio="xMinYMin meet">
                <g fill="none" stroke="#0ff"><path d="M246 795h20M261 792v36M265 792v36M235 818v9h26M240 803v16M286 792v26M300 793l16 6M286 803l32 12M286 810l32 8"/><path d="M286 806l30 12M292 803l-6 9M302 806l-8 10M312 811l-8 7" stroke-dasharray="3 1"/></g>
                <g fill="none" stroke="#c0c0c0"><path d="M270 793v32M286 789h32M232 800v22"/></g>
                <path d="M286 819h60" stroke="#0f0"/>
                <path d="M229 767.500h30M229 778.500h12M262 768.500h6" stroke="#0c0" stroke-width="2" stroke-dasharray="2 1"/>
                <path d="M226 771h35" stroke="red" stroke-width="2"/>
                <path d="M270 767h23v4h-23z" fill="#ddd"/>
                <g fill="#ffc8e6"><path d="M240 783h44v8h-44zM240 776h20v12h-20zM266 776h26v12h-26zM224 790h25v12h-25zM273 791h26v12h-26zM224 806h32v12h-32zM272 806h32v12h-32zM224 821h25v12h-25zM273 821h26v12h-26zM261 833h26v10h-26zM350 817h20v10h-20zM328 820h26v12h-26z"/></g>
                <g class="dim"><text x="242" y="786">10</text><text x="267" y="786">900</text><text x="225" y="800">150</text><text x="274" y="801">200</text><text x="225" y="816">2000</text><text x="273" y="816">2000</text><text x="225" y="831">500</text><text x="274" y="831">200</text><text x="262" y="842">240</text><text x="356" y="826">00</text><text x="330" y="830">500</text></g>
                <path d="M246 766h92v70h-6v-7h-80v7h-6z" fill="none" stroke="#f0f" stroke-width="2"/>
            </svg>
        </aside>
        <div class="viewport"></div>
    </main>

    <footer class="status">
        <span class="msg">单点布置: ①左键布置构件(+Shift键基点硬定位，+Ctrl键构件定位)</span>
        <span class="level">层高:3m; 底标高:-3m; 基础层</span>
        <span class="coord">(x,y,z)坐标或旋转角度</span>
        <button class="strong">轴号</button>
        <button disabled>正交</button>
        <button class="strong">动态</button>
        <button class="strong">图纸</button>
        <button>捕捉</button>
        <button disabled>分层</button>
        <button>提示</button>
        <button>编号</button>
        <button><svg class="ic"><use href="#calc"/></svg></button>
        <button><svg class="ic"><use href="#print"/></svg></button>
        <button><svg class="ic"><use href="#frame"/></svg></button>
    </footer>

    <!-- property dialog -->
    <section class="dialog" role="dialog" aria-label="属性设置">
        <div class="dlg-title">
            <svg class="ic"><use href="#dlglogo"/></svg>
            <h2>属性设置: -&gt;当前楼层:基础层</h2>
            <div class="win-btns">
                <button class="off" aria-label="最小化"><svg><use href="#min"/></svg></button>
                <button aria-label="最大化"><svg><use href="#max"/></svg></button>
                <button aria-label="关闭窗口"><svg><use href="#x"/></svg></button>
            </div>
        </div>
        <div class="dlg-tools">
            <button><svg class="ic"><use href="#layers"/></svg>楼层</button>
            <div class="combo">
                <svg class="ic"><use href="#misc"/></svg>
                <select aria-label="构件类别"><option>零星构件</option></select>
                <svg class="chev"><use href="#chev"/></svg>
            </div>
            <i class="sep"></i>
            <button class="wide"><svg class="ic"><use href="#add"/></svg>添加<svg class="down"><use href="#down"/></svg></button>
            <i class="sep"></i>
            <button><svg class="ic"><use href="#copy"/></svg>复制</button>
            <button><svg class="ic"><use href="#rename"/></svg>重命名</button>
            <i class="sep"></i>
            <button><svg class="ic"><use href="#del"/></svg>删除</button>
            <i class="sep"></i>
            <button><svg class="ic"><use href="#stack"/></svg>属性楼层复制</button>
            <i class="sep"></i>
            <button><svg class="ic"><use href="#tree"/></svg>批量自动套</button>
            <i class="sep"></i>
            <button><svg class="ic"><use href="#entry"/></svg>属性表格录入</button>
            <i class="sep"></i>
            <button><svg class="ic"><use href="#ok"/></svg>关闭</button>
            <i class="sep"></i>
        </div>
        <div class="dlg-body">
            <ul class="tree dlg-tree">
                <li><div class="row"><button class="exp"></button><svg class="ic"><use href="#misc"/></svg><span>零星构件</span></div>
                    <ul>
                        <li><div class="row"><button class="exp"></button><svg class="ic"><use href="#haunch"/></svg><span>构件加腋</span></div>
                            <ul>
                                <li><div class="row"><button class="exp"></button><svg class="ic"><use href="#haunch"/></svg><span>梁侧加腋</span></div>
                                    <ul><li><div class="row red"><svg class="ic"><use href="#haunch"/></svg><span>T1形-1</span></div></li></ul></li>
                                <li><div class="row"><button class="exp plus"></button><svg class="ic"><use href="#whaunch"/></svg><span>墙竖向加腋</span></div></li>
                                <li><div class="row"><button class="exp plus"></button><svg class="ic"><use href="#whaunch"/></svg><span>墙水平加腋</span></div></li>
                            </ul></li>
                        <li><div class="row"><button class="exp plus"></button><svg class="ic"><use href="#steps"/></svg><span>台阶</span></div></li>
                        <li><div class="row"><button class="exp plus"></button><svg class="ic"><use href="#facestep"/></svg><span>面式台阶</span></div></li>
                        <li><div class="row"><button class="exp"></button><svg class="ic"><use href="#ramp"/></svg><span>坡道</span></div>
                            <ul><li><div class="row red"><svg class="ic"><use href="#hand"/></svg><span class="sel focus">PD1</span></div></li></ul></li>
                        <li><div class="row"><button class="exp plus"></button><svg class="ic"><use href="#apron"/></svg><span>散水</span></div></li>
                        <li><div class="row"><button class="exp"></button><svg class="ic"><use href="#trench"/></svg><span>地沟</span></div>
                            <ul><li><div class="row red"><svg class="ic"><use href="#trench"/></svg><span>DG1</span></div></li></ul></li>
                        <li><div class="row"><button class="exp plus"></button><svg class="ic"><use href="#strip"/></svg><span>后浇带</span></div></li>
                        <li><div class="row"><button class="exp"></button><svg class="ic"><use href="#scaffold"/></svg><span>脚手架</span></div>
                            <ul><li><div class="row red"><svg class="ic"><use href="#scaffold"/></svg><span>JSJ</span></div></li></ul></li>
                        <li><div class="row"><button class="exp plus"></button><svg class="ic"><use href="#well"/></svg><span>天井</span></div></li>
                        <li><div class="row"><button class="exp plus"></button><svg class="ic"><use href="#shovel"/></svg><span>平整场地</span></div></li>
                        <li><div class="row"><button class="exp"></button><svg class="ic"><use href="#area"/></svg><span>建筑面积</span></div>
                            <ul><li><div class="row red"><svg class="ic"><use href="#area"/></svg><span>JZMJ1</span></div></li></ul></li>
                    </ul></li>
            </ul>
            <div class="dlg-main">
                <div class="page-tabs"><button class="active">构件设置</button><button>套定额</button></div>
                <div class="page">
                    <div class="grid-box">
                        <table class="props">
                            <colgroup><col class="c-name"><col class="c-val"><col class="c-chk"></colgroup>
                            <thead><tr><th>名称</th><th>属性</th><th>附加</th></tr></thead>
                            <tbody>
                                <tr><th>名称编号</th><td>PD1</td><td><input type="checkbox" checked aria-label="附加 名称编号"></td></tr>
                                <tr><th>坡道类型</th><td>直形坡道1</td><td><input type="checkbox" aria-label="附加 坡道类型"></td></tr>
                                <tr><th>工程.底标高(mm)</th><td>层底(-3000)</td><td><input type="checkbox" aria-label="附加 底标高"></td></tr>
                                <tr><th>备注</th><td></td><td><input type="checkbox" aria-label="附加 备注"></td></tr>
                                <tr class="sec"><th><button class="fold"></button>截面信息</th><td></td><td><input type="checkbox" aria-label="附加 截面信息"></td></tr>
                                <tr class="sub"><th>坡道宽度</th><td>3000</td><td><input type="checkbox" aria-label="附加 坡道宽度"></td></tr>
                                <tr class="sub"><th>挡墙厚度</th><td>240</td><td><input type="checkbox" aria-label="附加 挡墙厚度"></td></tr>
                                <tr class="sub"><th>斜坡道段水平</th><td>2000</td><td><input type="checkbox" aria-label="附加 斜坡道段水平"></td></tr>
                                <tr class="sub"><th>下部平坡道段</th><td>200</td><td><input type="checkbox" aria-label="附加 下部平坡道段"></td></tr>
                                <tr class="sub"><th>上部平坡道段</th><td>200</td><td><input type="checkbox" aria-label="附加 上部平坡道段"></td></tr>
                                <tr class="sub"><th>挡墙下水平段</th><td>500</td><td><input type="checkbox" aria-label="附加 挡墙下水平段"></td></tr>
                                <tr class="sub"><th>挡墙倾斜段水</th><td>2000</td><td><input type="checkbox" aria-label="附加 挡墙倾斜段水"></td></tr>
                                <tr class="sub"><th>挡墙上水平段</th><td>150</td><td><input type="checkbox" aria-label="附加 挡墙上水平段"></td></tr>
                                <tr class="sub"><th>地面以上挡墙</th><td>300</td><td><input type="checkbox" aria-label="附加 地面以上挡墙"></td></tr>
                                <tr class="sub"><th>坡道板厚度</th><td>60</td><td><input type="checkbox" aria-label="附加 坡道板厚度"></td></tr>
                                <tr class="sub"><th>垫层厚度</th><td>300</td><td><input type="checkbox" aria-label="附加 垫层厚度"></td></tr>
                                <tr class="sub"><th>坡度系数</th><td>10</td><td><input type="checkbox" aria-label="附加 坡度系数"></td></tr>
                                <tr class="sub"><th>栏板高</th><td>900</td><td><input type="checkbox" aria-label="附加 栏板高"></td></tr>
                                <tr class="sub last"><th>下部垫层水平</th><td>500</td><td><input type="checkbox" aria-label="附加 下部垫层水平"></td></tr>
                                <tr class="sec"><th><button class="fold plus"></button>土建业务属性</th><td></td><td><input type="checkbox" aria-label="附加 土建业务属性"></td></tr>
                                <tr class="custom"><th>自定义属性颜色</th><td><button class="swatch" aria-label="颜色"></button></td><td></td></tr>
                            </tbody>
                        </table>
                    </div>
                    <div class="cad">
                        <svg viewBox="784 227 586 528" preserveAspectRatio="xMinYMin meet">
                            <!-- model seen from above -->
                            <path d="M973 435h356v273h-26v-25H998v25h-25z" fill="#6680cb"/>
                            <path d="M998 457h305v205H998zM973 457h25v200h-25zM1303 452h27v205h-27z" fill="#5e76bf"/>
                            <path d="M987.500 436v272M997.500 436v272M1303.500 436v272M1328.500 436v272M973.500 436v272M973 707.500h25M1303 707.500h26" stroke="#26375f" fill="none"/>
                            <path d="M983 436h4v271h-4zM1313 435h5v272h-5z" fill="#00f0f5"/>
                            <path d="M971.500 708V434.500H1330V708M974 708.500h22M1305 708.500h22M998.500 683v24M1302.500 683v24" stroke="#f0f" fill="none"/>
                            <path d="M998 680h305v4H998z" fill="#f0f"/>
                            <path d="M970 433h5v6h-5zM1326 433h5v6h-5zM970 704h5v6h-5zM994 704h5v6h-5zM1301 704h5v6h-5zM1326 704h5v6h-5zM997 679h2v6h-2zM1301 679h2v6h-2z" fill="#00f"/>
                            <path d="M994 434l3-4 3 4z" fill="#0f0"/>
                            <!-- plan -->
                            <path d="M835.500 331.500h114v146h-16v-146M835.500 331.500v146h15v-146M835.500 345.500h15M933.500 345.500h16M850.500 350.500h83M850.500 445.500h83M850.500 463.500h83M835.500 436.500h15M933.500 436.500h16" stroke="#0ff" fill="none"/>
                            <path d="M850 327.500l3 3.500-3 3.500-3-3.500z" fill="#f0f"/>
                            <g stroke="#c0c0c0" fill="none">
                                <path d="M892.500 470v-53M888 424l4.500-7 4.500 7"/>
                                <path d="M850.500 312.500h84M850.500 305v14M934.500 302v18"/>
                                <path d="M820.500 345v132M820 332.500h9M811 345.500h17M811 436.500h18M811 477.500h18"/>
                                <path d="M968.500 332v131M959 332.500h18M959 351.500h18M959 445.500h17M959 463.500h17"/>
                                <path d="M1028.500 327.500h192M1028.500 322v15M1048.500 321v16M1167.500 320v33M1220.500 322v42"/>
                                <path d="M1237.500 378v64M1228 378.500h15M1228 408.500h15M1228 419.500h15M1228 442.500h15"/>
                                <path d="M1175.500 456.500h39M1175.500 449v14M1214.500 449v14"/>
                                <path d="M1028.500 480.500h168M1028.500 474v12M1049.500 473v14M1176.500 475v12M1196.500 475v11M1258 407.500h46"/>
                            </g>
                            <!-- section -->
                            <path d="M1028 383.500h22l122 36h42v23h-42l-122-37h-22z" fill="url(#hatch)" stroke="#0ff"/>
                            <path d="M1028.500 371v-28.500h22l118 36h52v64M1028.500 371.500h22l122 36h24v12" stroke="#0ff" fill="none"/>
                            <path d="M1000 373l-3 3M1007 373l-3 3M1015 373l-3 3M1023 373l-3 3M1027 377l-3 4M1027 387l-3 4M1027 397l-3 4M1027 407l-3 4M1027 417l-3 4M1027 427l-3 4M1027 437l-3 4M1027 445l-3 4" stroke="#0ff"/>
                            <path d="M997 371.500h31M1028.500 371v78M1028 442.500h193M1028 405.500h22l122 37M1265 399.500h33M1265 400l6 7 5-7" stroke="#0f0" fill="none"/>
                            <path d="M804 262h126" stroke="red" stroke-width="2"/>
                            <!-- axis marker -->
                            <path d="M809 702h4v22h-4z" fill="#0c0"/><path d="M811 693l4 9h-8z" fill="#0f0"/>
                            <path d="M815 726h22v4h-22z" fill="#d00"/><path d="M846 728l-9-5v10z" fill="#f00"/>
                            <circle cx="811" cy="728" r="4.500" fill="#00c"/>
                            <path fill="#ffc8e6" d="M857 280h20v12h-20zM951 280h26v12h-26zM879 296h32v12h-32zM794 332h26v12h-26zM794 392h32v12h-32zM794 447h26v12h-26zM978 336h26v12h-26zM976 392h32v12h-32zM977 448h26v12h-26zM934 492h26v12h-26zM1244 387h26v12h-26zM1244 407h20v12h-20zM1244 427h26v12h-26zM1183 444h26v12h-26z"/>
                            <g class="dim">
                                <text x="859" y="290">10</text><text x="952" y="290">900</text><text x="880" y="306">3000</text>
                                <text x="795" y="342">150</text><text x="795" y="402">2000</text><text x="795" y="457">500</text>
                                <text x="980" y="346">200</text><text x="977" y="402">2000</text><text x="979" y="458">200</text><text x="935" y="502">240</text>
                                <text x="1245" y="397">300</text><text x="1245" y="417">60</text><text x="1245" y="437">300</text><text x="1185" y="454">500</text>
                            </g>
                            <g class="note">
                                <text x="808" y="256" class="heading">直形坡道类型一</text>
                                <text x="933" y="258">定位:</text>
                                <text x="801" y="290">坡度(%):</text>
                                <text x="897" y="290">栏杆高:</text>
                                <text x="1264" y="395">底标高</text>
                                <g class="mark"><text x="1032" y="325">W5</text><text x="1104" y="325">W4</text><text x="1186" y="325">W3</text><text x="1032" y="473">W2</text><text x="1104" y="473">W0</text><text x="1180" y="473">W1</text></g>
                            </g>
                        </svg>
                        <select class="anchor" aria-label="定位"><option>底标高\0</option></select>
                        <div class="view-btns">
                            <button>二维</button><button>三维</button>
                            <span>图形操作</span>
                        </div>
                    </div>
                </div>
                <fieldset class="help">
                    <legend>操作说明</legend>
                    <p class="indent">操作说明: 左栏为数据输入网格，右侧为输入数据或图标说明。</p>
                    <p>工程量分类: 分类统计工程量数据标记,在后面工程量分析时将可以按标记分开工程量。</p>
                </fieldset>
            </div>
        </div>
    </section>

    <button class="float-btn" aria-label="工具">
        <svg viewBox="0 0 40 48"><path d="M16 8h22l-7 9H8z" fill="#a5d86e"/><path d="M8 17h24l6 7H16z" fill="#b9e68c"/><path d="M12 25h22l6 7H20z" fill="#6cc5fb"/><path d="M20 32h20l-6 9H12z" fill="#00aaf5"/></svg>
    </button>
</body>

</html>
```
FILE: styles.css
```css
* {
  box-sizing: border-box;
}

body {
  margin: 0;
  height: 100vh;
  display: flex;
  flex-direction: column;
  position: relative;
  overflow: hidden;
  background: #000;
  color: #000;
  font: 12px/16px "Liberation Serif", "Noto Sans CJK SC", serif;
  white-space: nowrap;
}

button,
input,
select {
  font: inherit;
  color: inherit;
  margin: 0;
  padding: 0;
  border: 0;
  background: none;
}

button {
  display: flex;
  align-items: center;
  gap: 2px;
  flex: none;
}

h1,
h2,
p {
  margin: 0;
  font-size: 12px;
  font-weight: normal;
}

ul {
  list-style: none;
  margin: 0;
  padding: 0;
}

.defs {
  position: absolute;
}

.ic {
  width: 16px;
  height: 16px;
  flex: none;
}

.down {
  width: 6px;
  height: 4px;
  flex: none;
}

.lat {
  font: 10px/16px "Liberation Mono", monospace;
}

.sep {
  width: 1px;
  height: 15px;
  flex: none;
  background: #8fb3e6;
}

/* header */
.app-header {
  position: relative;
  flex: none;
  height: 118px;
  color: #15428b;
}

.titlebar {
  display: flex;
  height: 18px;
  padding-left: 44px;
  background: #fff;
}

.quick {
  display: flex;
  align-items: flex-start;
  gap: 7px;
  width: 220px;
  height: 15px;
  padding: 0 8px;
  overflow: hidden;
  background: #eef0f3;
  border-bottom: 1px solid #bbb;
  border-right: 1px solid #bbb;
  border-radius: 0 0 14px 4px;
}

.quick button {
  margin-top: -3px;
}

.quick .down {
  margin-top: 3px;
}

.flip {
  transform: scaleX(-1);
}

.quick-more {
  width: 20px;
  height: 10px;
  justify-content: center;
}

.title {
  flex: 1;
  padding-left: 30px;
  text-align: center;
  font: 12px/14px "Noto Sans", "Noto Sans CJK SC", sans-serif;
  color: #111;
}

.win-btns {
  display: flex;
  color: #111;
}

.win-btns button {
  width: 46px;
  justify-content: center;
}

.win-btns svg {
  width: 10px;
  height: 10px;
}

.win-btns.muted,
.win-btns .off {
  color: #aaa;
}

.muted button {
  height: 15px;
}

.app-logo {
  position: absolute;
  left: 4px;
  top: 0;
}

.app-logo svg {
  width: 37px;
  height: 37px;
}

.tabrow {
  display: flex;
  justify-content: space-between;
  align-items: flex-end;
  height: 25px;
  background: #bfdbff;
}

.app-tab {
  width: 155px;
  height: 23px;
  margin-left: 45px;
  justify-content: center;
  gap: 0;
  border: 1px solid #8db8e8;
  border-bottom: 0;
  border-radius: 3px 3px 0 0;
  background: linear-gradient(#f4f9ff, #d9e8f9);
}

.topbar {
  display: flex;
  align-items: center;
  gap: 6px;
  width: 60%;
  height: 24px;
  padding-left: 13px;
  background: linear-gradient(#e3efff, #b7d5fc);
}

.topbar .txt {
  gap: 3px;
  padding: 0 3px 0 1px;
}

.ribbon {
  display: flex;
  gap: 4px;
  height: 75px;
  padding: 1px 0 4px 1px;
  background: linear-gradient(#dbe6f4, #c7d9ed 28%, #d5e3f2 60%, #e3f4ff);
  border-bottom: 2px solid #5f6f88;
}

.group {
  display: flex;
  flex: none;
  border: 1px solid #a5c3e4;
  border-radius: 3px;
  background: linear-gradient(#dfe9f5, #c9daee 25%, #c2d6ee 76%, #d6e6f8);
  box-shadow: inset 0 0 0 1px #e4eefa;
}

.g1 { width: 110px; }
.g3 { width: 193px; }
.g4 { width: 84px; }
.g5 { width: 70px; }
.g6 { width: 101px; }
.g7 { width: 125px; }
.g8 { width: 176px; }

.g5,
.g6,
.g8 {
  margin-left: -1px;
}

.big {
  flex-direction: column;
  width: 58px;
  padding-top: 4px;
  gap: 2px;
}

.big.narrow {
  width: 48px;
}

.big-ic {
  width: 32px;
  height: 32px;
}

.narrow .big-ic {
  height: 24px;
  margin: 4px 0;
}

.col {
  display: flex;
  flex-direction: column;
  justify-content: space-around;
  padding: 2px 0 0 6px;
}

.g1 .col {
  padding-left: 0;
}

.g4 .col + .col {
  padding-left: 5px;
}

.g8 .col + .col {
  padding-left: 7px;
}

.col .lat {
  margin-right: -2px;
}

.bars {
  display: flex;
  flex-direction: column;
  align-items: flex-start;
  gap: 7px;
  padding: 9px 0 0 1px;
}

.bars .bar {
  display: flex;
  border: 1px solid #9ebce2;
  border-radius: 2px;
  background: linear-gradient(#dbe7f6, #c3d7f0);
}

.bar button {
  height: 20px;
  padding: 0 0 0 2px;
  border-right: 1px solid #b9d0ec;
}

.bar .only {
  padding: 0 2px;
}

.bar.icons button {
  width: 23px;
  justify-content: center;
  padding: 0;
}

.bar .on {
  background: linear-gradient(#fbd7a4, #fdb44b 50%, #ffe39a);
}

/* docked panels */
.workspace {
  flex: 1;
  display: flex;
  min-height: 0;
  background: #bfdbff;
}

.nav-panel {
  width: 168px;
  flex: none;
  display: flex;
  flex-direction: column;
}

.panel-head {
  display: flex;
  flex: none;
  align-items: center;
  justify-content: space-between;
  height: 17px;
  padding-right: 5px;
  background: #b5cdea;
  color: #15428b;
}

.panel-head button {
  color: #3d5f92;
}

.panel-head svg {
  width: 8px;
  height: 8px;
}

.list-panel .panel-head {
  padding-left: 3px;
}

.nav-tabs {
  display: flex;
  height: 18px;
  padding-left: 2px;
  border-bottom: 1px solid #fff;
  color: #15428b;
}

.nav-tabs button {
  padding: 0 6px;
  margin-right: 1px;
  border-radius: 6px 10px 0 0;
  background: #deecff;
}

.nav-tabs .active {
  background: #fff;
  color: #00194f;
}

.floor {
  display: flex;
  align-items: center;
  gap: 4px;
  height: 27px;
  padding: 3px 5px 0 2px;
  background: #f2f5fa;
  border-bottom: 1px solid #888;
}

.combo {
  flex: 1;
  display: flex;
  align-items: center;
  gap: 4px;
  height: 21px;
  padding: 0 4px;
  border: 1px solid #767676;
  background: #fff;
}

.combo select {
  appearance: none;
  flex: 1;
  min-width: 0;
  width: 0;
}

.chev {
  width: 10px;
  height: 6px;
  flex: none;
}

.tree {
  background: #fff;
  overflow: hidden;
}

.tree li {
  position: relative;
}

.tree ul {
  padding-left: 19px;
}

.tree li::before {
  content: "";
  position: absolute;
  left: 4px;
  top: 0;
  bottom: 0;
  border-left: 1px dotted #808080;
}

.tree li:last-child::before {
  bottom: auto;
  height: 8px;
}

.row {
  position: relative;
  display: flex;
  align-items: center;
  height: 16px;
}

.row::before {
  content: "";
  position: absolute;
  left: 5px;
  width: 9px;
  top: 8px;
  border-top: 1px dotted #808080;
}

.row .ic {
  margin: 0 3px 0 14px;
}

.row .exp + .ic {
  margin-left: 5px;
}

.row > span {
  padding: 0 1px;
}

.row.red {
  color: #f00;
}

.exp,
.fold {
  position: relative;
  display: inline-block;
  width: 9px;
  height: 9px;
  border: 1px solid #919191;
  border-radius: 1px;
  background: linear-gradient(#21409a, #21409a) center / 5px 1px no-repeat, #fff;
}

.exp.plus {
  background: linear-gradient(#21409a, #21409a) center / 5px 1px no-repeat, linear-gradient(#21409a, #21409a) center / 1px 5px no-repeat, #fff;
}

.sel {
  background: #0078d7;
  color: #fff;
}

.red .sel {
  color: #f00;
}

.focus {
  outline: 1px dotted #222;
}

.nav-tree {
  flex: 1;
  padding: 1px 0 0 7px;
}

.nav-tree > li:first-child::before {
  top: 8px;
}

.nav-foot {
  display: flex;
  height: 23px;
  border-top: 2px solid #8a96a8;
  color: #15428b;
}

.nav-foot button {
  padding: 0 3px 0 8px;
  border-right: 1px solid #8fb0dd;
  background: linear-gradient(#e3efff, #bdd6fa);
}

.nav-foot button:first-child {
  padding: 0 2px 0 3px;
  width: 26px;
}

.nav-foot button:last-child {
  flex: 1;
}

.splitter {
  width: 6px;
  flex: none;
  background: linear-gradient(#6fb8ec, #6fb8ec) 1px 292px / 4px 70px no-repeat;
}

.list-panel {
  width: 242px;
  flex: none;
  display: flex;
  flex-direction: column;
  padding-right: 6px;
}

.list-tools {
  display: flex;
  flex: none;
  align-items: center;
  gap: 6px;
  height: 23px;
  padding-left: 7px;
  background: linear-gradient(#e3efff, #bdd6fa);
}

.list-tools input {
  width: 56px;
  height: 15px;
  background: #fff;
}

.list-tree {
  flex: none;
  height: 317px;
  padding-left: 8px;
  border: 1px solid #76797f;
}

.hsplit {
  flex: none;
  height: 5px;
  background: linear-gradient(#6fb8ec, #6fb8ec) 47px 1px / 70px 3px no-repeat;
}

.prop-box {
  flex: none;
  height: 257px;
  margin-top: 3px;
  overflow: hidden;
  background: #fff;
  border: 1px solid #777;
  border-bottom: 3px solid #f0f0f0;
}

.props {
  border-collapse: separate;
  border-spacing: 0;
  table-layout: fixed;
  width: 239px;
}

.props th,
.props td {
  position: relative;
  height: 17px;
  padding: 0 4px;
  line-height: 16px;
  font-weight: normal;
  text-align: left;
  overflow: hidden;
  border-right: 1px solid #c0c0c0;
  border-bottom: 1px solid #c0c0c0;
}

.props.small {
  width: 234px;
}

.props.small th,
.props.small td {
  height: 18px;
  line-height: 17px;
}

.props .c-name {
  width: 104px;
}

.props .c-val {
  width: 100px;
}

.props .c-chk {
  width: 35px;
}

.props.small .c-name {
  width: 79px;
}

.props tbody th {
  color: #4080ff;
  border-color: #606060;
}

.props thead th,
.props.small thead th {
  height: 20px;
  line-height: 19px;
  background: #f0f0f0;
  border-color: #606060;
}

.props .sub td {
  font-family: "Liberation Sans", sans-serif;
  font-size: 11px;
}

.props tr.sec th,
.props tr.sec td:nth-child(2),
.props tr.custom th {
  background: #f7f9a8;
}

.props tr.sec th {
  padding-left: 2px;
  color: #000;
}

.fold {
  width: 11px;
  height: 11px;
  margin-right: 6px;
  vertical-align: -2px;
  border: 1px solid #0000c0;
  border-radius: 0;
  background: linear-gradient(#0000c0, #0000c0) center / 7px 1px no-repeat;
}

.fold.plus {
  background: linear-gradient(#0000c0, #0000c0) center / 7px 1px no-repeat, linear-gradient(#0000c0, #0000c0) center / 1px 7px no-repeat;
}

.props .sub th {
  padding: 0 0 0 20px;
}

.sub th::before {
  content: "";
  position: absolute;
  left: 7px;
  top: 0;
  bottom: -1px;
  border-left: 1px solid #0000c0;
}

.sub.last th::before {
  bottom: 8px;
}

.sub th::after {
  content: "";
  position: absolute;
  left: 7px;
  top: 8px;
  width: 12px;
  border-top: 1px solid #0000c0;
}

.props td:nth-child(3) {
  padding: 0;
  text-align: center;
}

.props input {
  appearance: none;
  position: relative;
  display: block;
  width: 13px;
  height: 13px;
  margin: 0 auto;
  border: 1px solid #1c5180;
  background: linear-gradient(135deg, #dcdcd7, #fff);
}

.props input:checked::after {
  content: "";
  position: absolute;
  left: 3px;
  top: 0;
  width: 3px;
  height: 6px;
  border: solid #21a121;
  border-width: 0 2px 2px 0;
  transform: rotate(40deg);
}

.swatch {
  width: 85px;
  height: 13px;
  margin-left: 3px;
  border: 1px solid #666;
  background: #fff;
}

.preview {
  flex: 1;
  min-height: 0;
  width: 100%;
  background: #000;
}

.dim text {
  font: 11px "Liberation Sans", sans-serif;
  fill: #000;
}

.viewport {
  flex: 1;
  background: #000;
  margin-bottom: 2px;
}

/* status bar */
.status {
  display: flex;
  align-items: flex-start;
  flex: none;
  height: 15px;
  overflow: hidden;
  background: linear-gradient(#dcebfe, #a9cbf5);
  border-top: 1px solid #6f8fbd;
  color: #15428b;
  line-height: 17px;
}

.status span,
.status button {
  flex: none;
  height: 20px;
  overflow: hidden;
  border-left: 1px solid #7d9fd0;
  padding-left: 4px;
}

.status .msg {
  flex: 1;
  padding: 0;
  border: 0;
}

.status .level {
  width: 206px;
}

.status .coord {
  width: 125px;
}

.status button {
  width: 31px;
  padding-left: 3px;
  line-height: 17px;
  align-items: flex-start;
}

.status .ic {
  margin-top: 1px;
}

.status button:nth-last-child(-n+3) {
  width: 21px;
  padding-left: 2px;
}

.status .strong {
  color: #000;
}

.status :disabled {
  color: #9aa7ba;
}

/* property dialog */
.dialog {
  position: absolute;
  left: 316px;
  right: 69px;
  top: 148px;
  bottom: 39px;
  display: flex;
  flex-direction: column;
  border: 1px solid #333;
  border-top: 0;
  background: #f0f0f0;
}

.dlg-title {
  display: flex;
  flex: none;
  align-items: center;
  gap: 5px;
  height: 29px;
  padding-left: 7px;
  background: #fff;
}

.dlg-title h2 {
  flex: 1;
  font: 12px/16px "Noto Sans", "Noto Sans CJK SC", sans-serif;
}

.dlg-title .win-btns {
  height: 29px;
}

.dlg-tools {
  display: flex;
  flex: none;
  align-items: center;
  gap: 7px;
  height: 27px;
  padding: 2px 0 2px 7px;
  color: #0a2360;
}

.dlg-tools .sep {
  height: 21px;
  margin: 0 1px;
  background: #a0a0a0;
}

.dlg-tools .combo {
  flex: none;
  width: 73px;
  height: 22px;
  padding: 0 4px 0 3px;
  gap: 3px;
  color: #000;
}

.wide .down {
  margin-left: 8px;
}

.dlg-body {
  flex: 1;
  display: flex;
  gap: 5px;
  min-height: 0;
  padding-left: 3px;
}

.dlg-tree {
  width: 191px;
  flex: none;
  padding: 1px 0 0 8px;
  border: 1px solid #828790;
}

.dlg-tree > li::before {
  display: none;
}

.dlg-main {
  flex: 1;
  min-width: 0;
  display: flex;
  flex-direction: column;
}

.page-tabs {
  display: flex;
  align-items: flex-end;
  height: 22px;
  padding-left: 1px;
}

.page-tabs button {
  height: 18px;
  padding: 0 9px;
  border: 1px solid #d9d9d9;
  border-bottom: 0;
}

.page-tabs .active {
  height: 20px;
  padding: 0 6px;
  margin-bottom: 1px;
  background: #fff;
}

.page {
  flex: 1;
  display: flex;
  gap: 5px;
  min-height: 0;
  padding: 1px 0 0 2px;
}

.grid-box {
  width: 261px;
  flex: none;
  padding: 1px 0 0 1px;
  background: #fff;
  border: 1px solid #8a8a8a;
  border-right-color: #e3e3e3;
  border-bottom-color: #e3e3e3;
}

.cad {
  position: relative;
  flex: 1;
  min-width: 0;
  background: #000;
}

.cad > svg {
  display: block;
  width: 100%;
  height: 100%;
}

.note text {
  font-size: 12px;
  fill: #0f0;
}

.note .heading {
  font-size: 17px;
  font-weight: bold;
}

.note .mark text {
  font: 10px "Liberation Mono", monospace;
}

.anchor {
  position: absolute;
  left: 186px;
  top: 15px;
  width: 90px;
  height: 19px;
  padding: 0 0 0 2px;
  appearance: none;
  border: 2px inset #bbb;
  background:
    linear-gradient(#000, #000) right 4px top 6px / 7px 1px no-repeat,
    linear-gradient(#000, #000) right 5px top 7px / 5px 1px no-repeat,
    linear-gradient(#000, #000) right 6px top 8px / 3px 1px no-repeat,
    linear-gradient(#000, #000) right 7px top 9px / 1px 1px no-repeat,
    linear-gradient(#ddd, #ddd) right / 15px 100% no-repeat,
    #fff;
}

.view-btns {
  position: absolute;
  top: 1px;
  right: 1px;
  display: grid;
  grid-template-columns: 32px 32px;
  gap: 0 1px;
  padding: 1px 0 0 1px;
  background: #c0c0c0;
}

.view-btns button {
  height: 17px;
  justify-content: center;
  border: 1px solid #000;
}

.view-btns span {
  grid-column: 1 / 3;
  padding-left: 9px;
}

.help {
  flex: none;
  height: 58px;
  margin: 4px 0 1px;
  padding: 3px 6px 0;
  border: 1px solid #dcdcdc;
  border-right: 0;
  line-height: 12px;
}

.help legend {
  padding: 0 1px;
  line-height: 14px;
}

.help .indent {
  padding-left: 12px;
}

.float-btn {
  position: absolute;
  right: 0;
  top: 140px;
  width: 40px;
  height: 48px;
  border-radius: 5px 0 0 5px;
  background: #fafdff;
}

.float-btn svg {
  width: 40px;
  height: 48px;
}
```
